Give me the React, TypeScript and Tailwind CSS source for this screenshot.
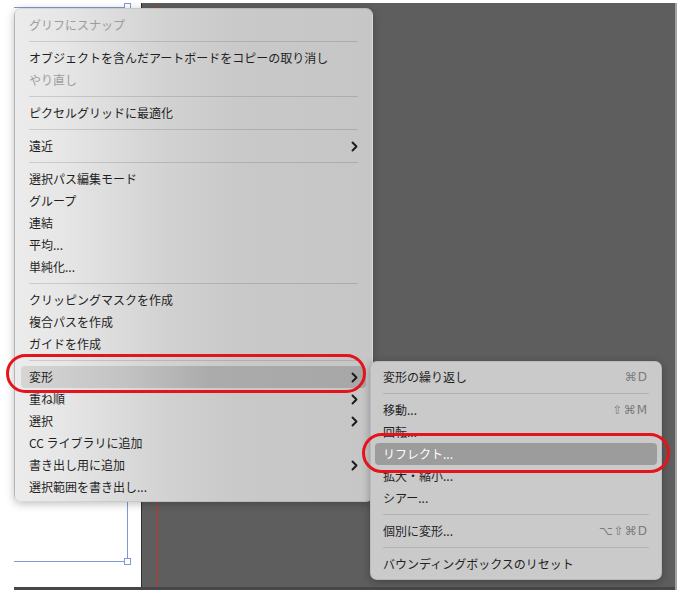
import React from "react";

type Item =
  | { type: "sep" }
  | { type: "item"; label: string; disabled?: boolean; sub?: boolean; hl?: boolean; sc?: string };

const mainItems: Item[] = [
  { type: "item", label: "グリフにスナップ", disabled: true },
  { type: "sep" },
  { type: "item", label: "オブジェクトを含んだアートボードをコピーの取り消し" },
  { type: "item", label: "やり直し", disabled: true },
  { type: "sep" },
  { type: "item", label: "ピクセルグリッドに最適化" },
  { type: "sep" },
  { type: "item", label: "遠近", sub: true },
  { type: "sep" },
  { type: "item", label: "選択パス編集モード" },
  { type: "item", label: "グループ" },
  { type: "item", label: "連結" },
  { type: "item", label: "平均..." },
  { type: "item", label: "単純化..." },
  { type: "sep" },
  { type: "item", label: "クリッピングマスクを作成" },
  { type: "item", label: "複合パスを作成" },
  { type: "item", label: "ガイドを作成" },
  { type: "sep" },
  { type: "item", label: "変形", sub: true, hl: true },
  { type: "item", label: "重ね順", sub: true },
  { type: "item", label: "選択", sub: true },
  { type: "item", label: "CC ライブラリに追加" },
  { type: "item", label: "書き出し用に追加", sub: true },
  { type: "item", label: "選択範囲を書き出し..." },
];

const subItems: Item[] = [
  { type: "item", label: "変形の繰り返し", sc: "⌘D" },
  { type: "sep" },
  { type: "item", label: "移動...", sc: "⇧⌘M" },
  { type: "item", label: "回転..." },
  { type: "item", label: "リフレクト...", hl: true },
  { type: "item", label: "拡大・縮小..." },
  { type: "item", label: "シアー..." },
  { type: "sep" },
  { type: "item", label: "個別に変形...", sc: "⌥⇧⌘D" },
  { type: "sep" },
  { type: "item", label: "バウンディングボックスのリセット" },
];

const Chevron = () => (
  <svg width="7" height="11" viewBox="0 0 7 11" className="shrink-0">
    <path d="M1.5 1.5 L5.5 5.5 L1.5 9.5" fill="none" stroke="#1a1a1a" strokeWidth="1.9" strokeLinecap="round" strokeLinejoin="round" />
  </svg>
);

export default function App() {
  const font = { fontFamily: '"Noto Sans CJK JP", "Noto Sans", "DejaVu Sans", sans-serif' };
  return (
    <div className="relative w-[682px] h-[590px] overflow-hidden bg-white" style={font}>
      {/* background canvas */}
      <div className="flex flex-col w-full h-full">
        <div className="h-[3px] bg-white" />
        <div className="flex flex-1">
          <div className="w-[14px] bg-white" />
          <div className="flex flex-col flex-1">
            <div className="flex h-[584px]">
              <div className="relative w-[128px] bg-white border-r border-[#2e2e2e] overflow-hidden">
                <div className="absolute left-[-10px] top-[4px] w-[124px] h-[555px] border border-[#7d9ad6]" />
                <div className="absolute left-[110px] top-[0px] w-[7px] h-[7px] bg-white border border-[#7d9ad6]" />
                <div className="absolute left-[110px] top-[555px] w-[7px] h-[7px] bg-white border border-[#7d9ad6]" />
              </div>
              <div className="flex-1 bg-[#5e5e5e] flex">
                <div className="ml-[14px] w-px bg-[#c4352e]" />
              </div>
            </div>
            <div className="flex-1 bg-[#474747]" />
          </div>
          <div className="w-[2px] bg-[#a4a4a4]" />
          <div className="w-[5px] bg-white" />
        </div>
      </div>

      {/* main menu */}
      <div
        className="absolute left-[14px] top-[8px] w-[359px] h-[494px] rounded-[7px] pt-[5px] pb-[5px] shadow-[0_2px_8px_rgba(0,0,0,0.25)] border border-[rgba(0,0,0,0.08)]"
        style={{ background: "linear-gradient(to right, #ececec 0%, #e6e6e6 14%, #d2d2d2 42%, #c9c9c9 62%, #c6c6c6 100%)" }}
      >
        {mainItems.map((it, i) =>
          it.type === "sep" ? (
            <div key={i} className="h-[11px] flex items-center px-[14px]">
              <div className="h-px w-full bg-[rgba(0,0,0,0.13)]" />
            </div>
          ) : (
            <div
              key={i}
              className={
                "h-[22px] mx-[6px] pl-[8px] pr-[8px] flex items-center justify-between rounded-[4px] text-[12px] leading-none " +
                (it.disabled ? "text-[#9c9c9c]" : "text-[#1f1f1f]")
              }
              style={it.hl ? { background: "linear-gradient(to right, #d5d5d5 0%, #c3c3c3 30%, #ababab 55%, #a7a7a7 100%)" } : undefined}
            >
              <span>{it.label}</span>
              {it.sub && <Chevron />}
            </div>
          )
        )}
      </div>

      {/* submenu */}
      <div className="absolute left-[370px] top-[361px] w-[292px] h-[219px] rounded-[7px] pt-[4px] pb-[5px] bg-[#cacaca] shadow-[0_2px_8px_rgba(0,0,0,0.3)] border border-[rgba(0,0,0,0.08)]">
        {subItems.map((it, i) =>
          it.type === "sep" ? (
            <div key={i} className="h-[11px] flex items-center px-[12px]">
              <div className="h-px w-full bg-[#b2b2b2]" />
            </div>
          ) : (
            <div
              key={i}
              className={
                "h-[22px] mx-[4px] pl-[8px] pr-[9px] flex items-center justify-between rounded-[4px] text-[12px] leading-none " +
                (it.hl ? "bg-[#9c9c9c] text-white" : "text-[#1f1f1f]")
              }
            >
              <span>{it.label}</span>
              {it.sc && <span className="text-[#7b7b7b] tracking-[1px]" style={{ fontFamily: '"DejaVu Sans", sans-serif', fontSize: 12 }}>{it.sc}</span>}
            </div>
          )
        )}
      </div>

      {/* red annotation ovals */}
      <div className="absolute left-[6px] top-[354px] w-[360px] h-[39px] rounded-full border-[3px] border-[#e4141c]" />
      <div className="absolute left-[362px] top-[433px] w-[308px] h-[40px] rounded-full border-[3px] border-[#e4141c]" />
    </div>
  );
}
